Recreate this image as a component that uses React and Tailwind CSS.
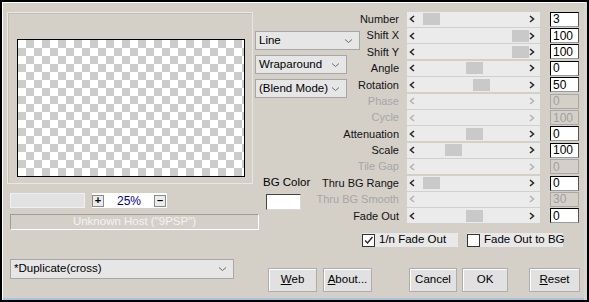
import React from 'react';

const ROWS = [
  { label: 'Number', value: '3', thumb: 16 },
  { label: 'Shift X', value: '100', thumb: 105 },
  { label: 'Shift Y', value: '100', thumb: 105 },
  { label: 'Angle', value: '0', thumb: 59 },
  { label: 'Rotation', value: '50', thumb: 66 },
  { label: 'Phase', value: '0', disabled: true },
  { label: 'Cycle', value: '100', disabled: true },
  { label: 'Attenuation', value: '0', thumb: 59 },
  { label: 'Scale', value: '100', thumb: 38 },
  { label: 'Tile Gap', value: '0', disabled: true },
  { label: 'Thru BG Range', value: '0', thumb: 16 },
  { label: 'Thru BG Smooth', value: '30', disabled: true },
  { label: 'Fade Out', value: '0', thumb: 59 },
];

const Chevron = ({ dir, disabled }) => (
  <svg width="6" height="8" viewBox="0 0 6 8" className="shrink-0">
    <path
      d={dir === 'left' ? 'M5 1 L1.5 4 L5 7' : 'M1 1 L4.5 4 L1 7'}
      fill="none"
      stroke={disabled ? '#b4b4b4' : '#2a2a2a'}
      strokeWidth="1.6"
    />
  </svg>
);

const Caret = () => (
  <svg width="9" height="6" viewBox="0 0 9 6" className="shrink-0">
    <path d="M1 1.5 L4.5 4.5 L8 1.5" fill="none" stroke="#6b6b6b" strokeWidth="1" />
  </svg>
);

const Select = ({ text, className }) => (
  <div
    className={`flex items-center justify-between border border-[#a7a7a7] bg-[#e6e6e6] pl-[3px] pr-[6px] text-[11.5px] text-black ${className}`}
  >
    <span className="whitespace-nowrap">{text}</span>
    <Caret />
  </div>
);

const Slider = ({ row }) => (
  <div className="relative flex h-[15px] w-[133px] shrink-0 items-center justify-between bg-[#ebebeb] pl-[2px] pr-[5px]">
    <Chevron dir="left" disabled={row.disabled} />
    {!row.disabled && (
      <div
        className="absolute top-[1.5px] h-[12px] w-[17px] bg-[#c9c9c9]"
        style={{ left: row.thumb }}
      />
    )}
    <Chevron dir="right" disabled={row.disabled} />
  </div>
);

const Button = ({ children, className }) => (
  <button
    className={`flex h-[24px] shrink-0 items-center justify-center border border-[#adadad] bg-[#e1e1e1] text-[11.5px] text-black shadow-[inset_1px_1px_0_#fff] ${className}`}
  >
    {children}
  </button>
);

const Checkbox = ({ checked, label, className }) => (
  <div className={`flex h-[14px] shrink-0 items-center bg-[#e8e8e8] ${className}`}>
    <div className="flex h-[13px] w-[13px] shrink-0 items-center justify-center border border-[#333] bg-white">
      {checked && (
        <svg width="11" height="11" viewBox="0 0 11 11">
          <path d="M2 5.5 L4.5 8 L9.5 2" fill="none" stroke="#222" strokeWidth="1.3" />
        </svg>
      )}
    </div>
    <span className="ml-[4px] whitespace-nowrap text-[11.5px] text-black">{label}</span>
  </div>
);

export default function App() {
  return (
    <div className="h-[302px] w-[589px] overflow-hidden border-2 border-black bg-[#d4d0c8] font-['Liberation_Sans',Arial,sans-serif] text-[11px]">
      <div className="flex h-full flex-col border-l border-t border-white border-r-[3px] border-r-[#d8d6d0]">
        <div className="flex flex-1">
          {/* left column */}
          <div className="w-[252px] shrink-0 pl-[4px] pt-[9px]">
            <div className="h-[172px] w-[246px] border border-[#e9e7e1] shadow-[inset_1px_1px_0_#c4c0b8] pl-[9px] pt-[26px]">
              <div className="h-[138px] w-[228px] border border-black bg-[conic-gradient(#cccccc_25%,#ffffff_0_50%,#cccccc_0_75%,#ffffff_0)] bg-[length:16px_16px]" />
            </div>
            <div className="ml-[3px] mt-[9px] flex h-[15px] items-center">
              <div className="h-[15px] w-[75px] border border-[#f0f0f0] bg-[#e2e2e2]" />
              <div className="ml-[7px] flex h-[15px] w-[75px] items-center bg-white">
                <div className="flex h-[12px] w-[12px] items-center justify-center border border-[#8a8a8a] bg-[#ececec] text-[11px] font-bold leading-none">
                  +
                </div>
                <span className="flex-1 text-center text-[12px] text-[#000080]">25%</span>
                <div className="mr-[1px] flex h-[12px] w-[12px] items-center justify-center border border-[#8a8a8a] bg-[#ececec] text-[11px] font-bold leading-none">
                  –
                </div>
              </div>
            </div>
            <div className="ml-[3px] mt-[6px] flex h-[16px] w-[249px] items-center justify-center border border-[#9c9c9c] border-b-white border-r-white text-[11.5px] text-[#f3f3f3]">
              Unknown Host ("9PSP")
            </div>
            <Select text="*Duplicate(cross)" className="ml-[3px] mt-[29px] h-[20px] w-[224px]" />
          </div>

          {/* right column */}
          <div className="flex w-[329px] min-w-0 shrink-0 flex-col pt-[8px]">
            <div className="flex">
              <div className="flex w-[105px] shrink-0 flex-col pt-[20px]">
                <Select text="Line" className="h-[19px] w-[105px]" />
                <Select text="Wraparound" className="mt-[5px] h-[19px] w-[92px]" />
                <Select text="(Blend Mode)" className="mt-[5px] h-[19px] w-[92px]" />
                <div className="ml-[8px] mt-[76px] text-[11.5px] text-black">BG Color</div>
                <div className="ml-[11px] mt-[3px] h-[16px] w-[35px] border border-[#444] border-b-[#d8d8d8] border-r-[#d8d8d8] bg-white" />
              </div>
              <div className="flex w-[219px] min-w-0 shrink-0 flex-col">
                {ROWS.map((row) => (
                  <div key={row.label} className="flex h-[16.4px] items-center">
                    <div className="flex min-w-0 flex-1 justify-end pr-[8px]">
                      <span
                        className={`whitespace-nowrap text-[11px] ${row.disabled ? 'text-[#a6a6a6]' : 'text-[#111]'}`}
                      >
                        {row.label}
                      </span>
                    </div>
                    <Slider row={row} />
                    <div
                      className={`ml-[10px] flex h-[15px] w-[29px] shrink-0 items-center border pl-[2px] text-[12px] leading-none ${
                        row.disabled
                          ? 'border-[#a8a8a8] bg-[#d4d0c8] text-[#a0a0a0]'
                          : 'border-black border-b-[#9a9a9a] border-r-[#555] bg-white text-black'
                      }`}
                    >
                      {row.value}
                    </div>
                  </div>
                ))}
                <div className="mt-[9px] flex pl-[2px]">
                  <Checkbox checked label="1/n Fade Out" className="w-[96px]" />
                  <Checkbox label="Fade Out to BG" className="ml-[9px] w-[96px]" />
                </div>
              </div>
            </div>
            <div className="mt-[21px] flex">
              <Button className="ml-[13px] w-[49px]">
                <span className="underline">W</span>eb
              </Button>
              <Button className="ml-[6px] w-[49px]">
                <span className="underline">A</span>bout...
              </Button>
              <Button className="ml-[37px] w-[48px]">Cancel</Button>
              <Button className="ml-[5px] w-[46px]">OK</Button>
              <Button className="ml-[21px] w-[51px]">
                <span className="underline">R</span>eset
              </Button>
            </div>
          </div>
        </div>
        <div className="h-[2px] bg-[#a7c3e0]" />
      </div>
    </div>
  );
}
